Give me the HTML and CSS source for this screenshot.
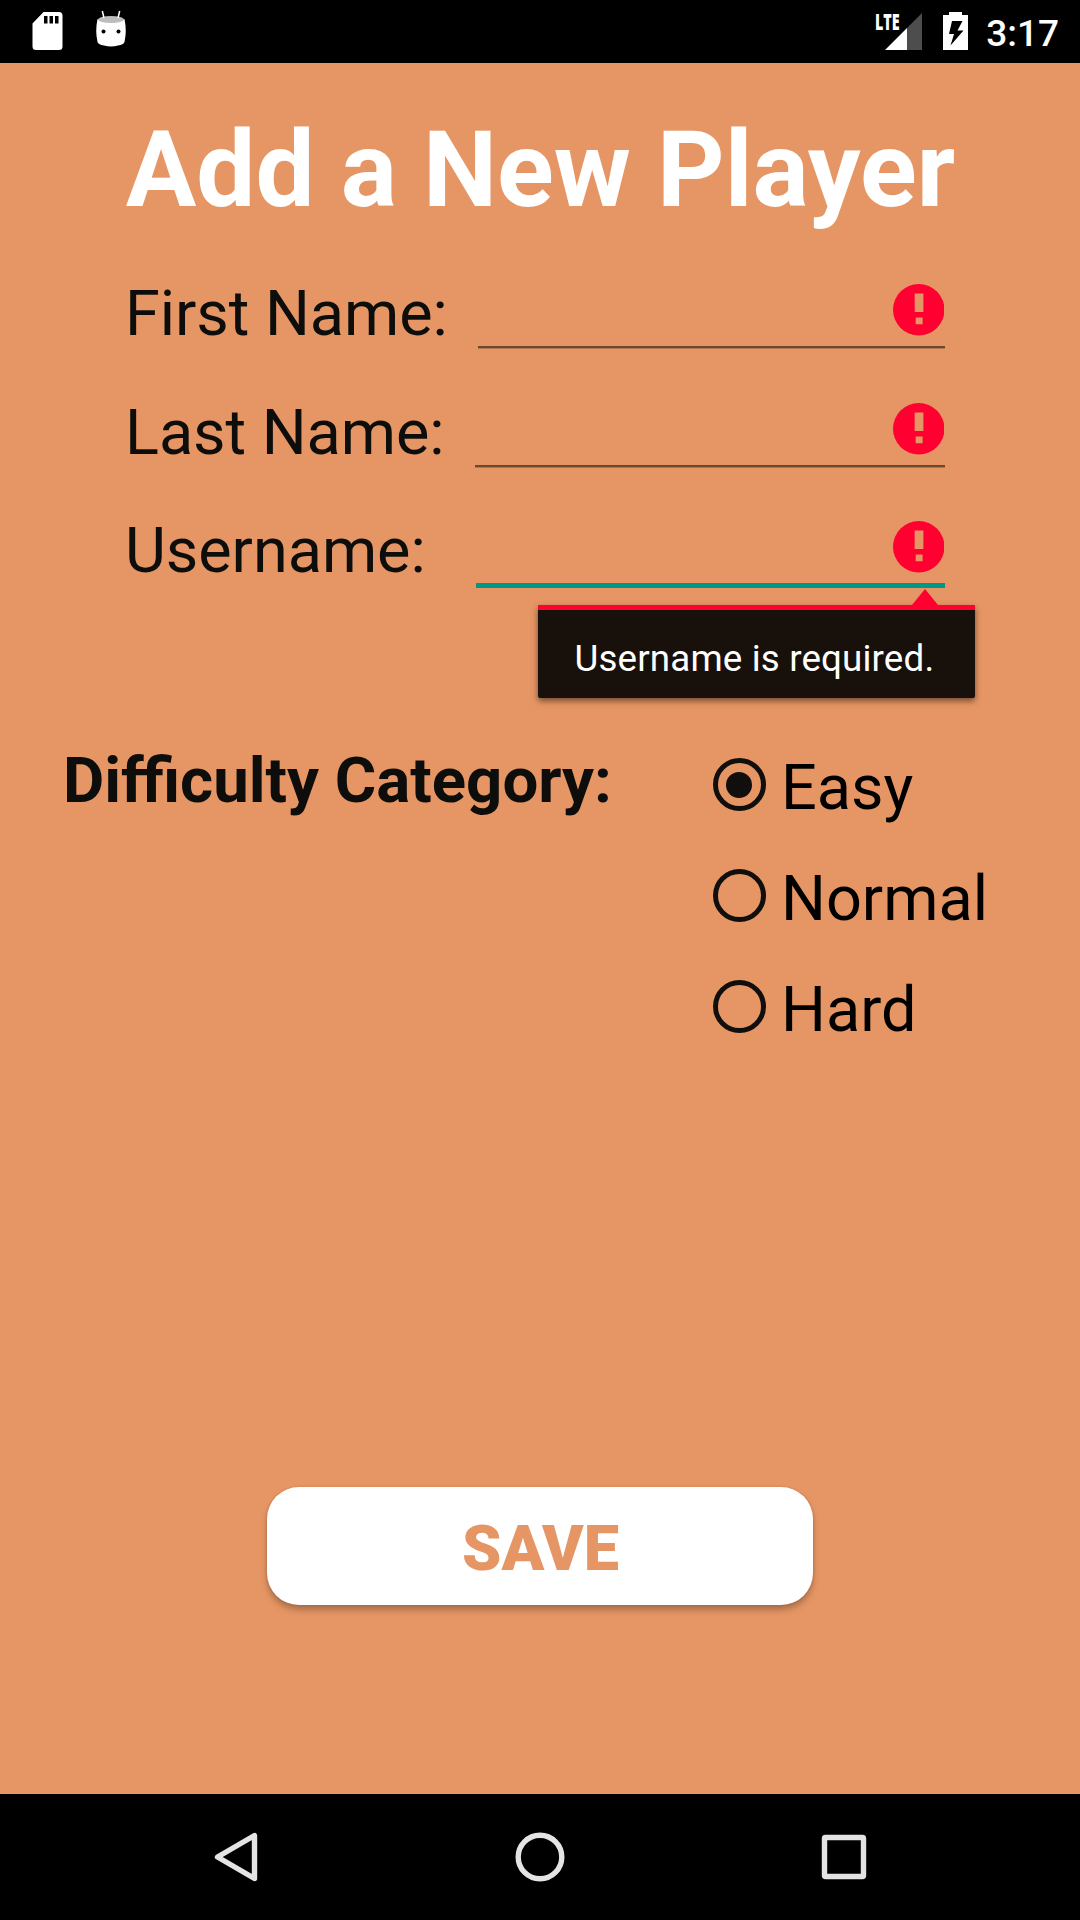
FILE: index.html
```html
<!DOCTYPE html>
<html lang="en">
<head>
<meta charset="utf-8">
<title>Add a New Player</title>
<link rel="stylesheet" href="styles.css">
</head>
<body>
<div class="screen">
  <header class="status">
    <div class="status-left">
      <svg class="sd" width="31" height="38" viewBox="0 0 31 38"><path fill="#fff" fill-rule="evenodd" d="M11.5 0H27Q30.500 0 30.500 3.500V34.500Q30.500 38 27 38H4Q.5 38 .5 34.500V11.500ZM12 4V11.500H15.500V4ZM17.500 4V11.500H21V4ZM23 4V11.500H26.500V4Z"/></svg>
      <svg class="droid" width="32" height="38" viewBox="0 0 32 38"><path fill="#fff" d="M2.500 9Q16 15 29.500 9Q32 21 29.500 32Q28.500 34.500 23 35.500Q16 37.500 9 35.500Q3.500 34.500 2.500 32Q0 21 2.500 9Z"/><ellipse cx="16" cy="9.500" rx="12.800" ry="3.500" fill="#bcbcbc"/><path d="M7.300 1 9 8M24.700 1 23 8" stroke="#fff" stroke-width="1.500"/><circle cx="8.500" cy="21.500" r="2"/><circle cx="23.500" cy="21.500" r="2"/></svg>
    </div>
    <div class="status-right">
      <span class="signal"><svg width="37" height="37" viewBox="0 0 37 37"><path fill="#fff" d="M0 37 22 15V37Z"/><path fill="#4d4d4d" d="M22 15 37 0V37H22Z"/></svg><span class="lte">LTE</span></span>
      <svg class="battery" width="25" height="38" viewBox="0 0 25 38"><path fill="#fff" fill-rule="evenodd" d="M6 0H19V3H25V38H0V3H6ZM9 9 6 22H11L7.500 33.500 20.500 18.500H14.500L19.500 9Z"/></svg>
      <span class="time">3:17</span>
    </div>
  </header>

  <main>
    <h1>Add a New Player</h1>
    <form class="fields">
      <div class="row first">
        <label>First Name:</label>
        <div class="field"><svg class="error" viewBox="2 2 20 20"><path d="M12 2a10 10 0 1 0 0 20 10 10 0 0 0 0-20zM10.400 5.700h3.400v7.200h-3.400zM10.800 15h2.700v2.600h-2.700z"/></svg></div>
      </div>
      <div class="row last">
        <label>Last Name:</label>
        <div class="field"><svg class="error" viewBox="2 2 20 20"><path d="M12 2a10 10 0 1 0 0 20 10 10 0 0 0 0-20zM10.400 5.700h3.400v7.200h-3.400zM10.800 15h2.700v2.600h-2.700z"/></svg></div>
      </div>
      <div class="row user">
        <label>Username:</label>
        <div class="field focused"><svg class="error" viewBox="2 2 20 20"><path d="M12 2a10 10 0 1 0 0 20 10 10 0 0 0 0-20zM10.400 5.700h3.400v7.200h-3.400zM10.800 15h2.700v2.600h-2.700z"/></svg>
          <div class="popup">Username is required.</div>
        </div>
      </div>
    </form>

    <section class="difficulty">
      <h2>Difficulty Category:</h2>
      <div class="options">
        <div class="option"><span class="radio checked"></span><span>Easy</span></div>
        <div class="option"><span class="radio"></span><span>Normal</span></div>
        <div class="option"><span class="radio"></span><span>Hard</span></div>
      </div>
    </section>

    <button class="save" type="button">SAVE</button>
  </main>

  <nav class="navbar">
    <svg width="50" height="54" viewBox="0 0 50 54"><path d="M43.500 5.500V48.500L6.500 27Z"/></svg>
    <svg width="50" height="54" viewBox="0 0 50 54"><circle cx="25" cy="27" r="21.800"/></svg>
    <svg width="50" height="54" viewBox="0 0 50 54"><rect x="5.500" y="7.500" width="39" height="39" rx="1"/></svg>
  </nav>
</div>
</body>
</html>
```
FILE: styles.css
```css
* { box-sizing: border-box; }

body {
  margin: 0;
  font-family: Roboto, sans-serif;
  background: #e69664;
}

svg { display: block; }

.screen {
  width: 1080px;
  height: 1920px;
  display: flex;
  flex-direction: column;
  overflow: hidden;
}

.status {
  height: 63px;
  background: #000;
  display: flex;
  justify-content: space-between;
}

.status-left,
.status-right { display: flex; align-items: flex-start; }

.status-left { padding: 12px 0 0 32px; gap: 31.500px; }
.droid { margin-top: -2px; }

.status-right { padding: 12px 21px 0 0; color: #fff; }

.signal { position: relative; margin: 1px 21.500px 0 0; }

.lte {
  position: absolute;
  left: -9.500px;
  top: -4px;
  font: 800 22px/24px "Open Sans", sans-serif;
  transform: scaleX(.65);
  transform-origin: 0 0;
}

.time {
  margin-left: 18px;
  font-weight: 500;
  font-size: 37px;
  line-height: 43px;
}

main {
  flex: 1;
  display: flex;
  flex-direction: column;
}

h1 {
  margin: 43px 0 18px;
  padding-left: 1px;
  font-size: 105px;
  line-height: 130px;
  font-weight: 700;
  color: #fff;
  text-align: center;
}

.fields { padding: 0 135px 0 125px; }

.row {
  display: flex;
  align-items: flex-start;
  height: 119px;
}

.row.last { height: 118px; }

.row label {
  font-size: 63px;
  letter-spacing: -.05px;
  line-height: 119px;
  color: #0d0d0c;
}

.field {
  position: relative;
  flex: 1;
  height: 94px;
  margin-left: 30.500px;
  padding: 30px 1px 0 0;
  display: flex;
  justify-content: flex-end;
  border-bottom: 2px solid #6b482f;
  box-shadow: 0 1px #b1744e;
}

.user .field { margin-left: 50.500px; }

.field.focused {
  height: 97px;
  border-bottom: 5px solid #009688;
  box-shadow: none;
}

.error { width: 51.500px; height: 51.500px; fill: #ff0030; fill-rule: evenodd; }

.popup {
  position: absolute;
  top: 114px;
  right: -29.500px;
  width: 437px;
  height: 93px;
  padding: 18px 0 0 37px;
  border-top: 5px solid #ff0030;
  border-radius: 0 0 2px 2px;
  background: #18100b;
  box-shadow: 0 3px 6px rgba(0, 0, 0, .5);
  color: #fff;
  font-size: 36.75px;
  letter-spacing: .15px;
  line-height: 61px;
  white-space: nowrap;
}

.popup::before {
  content: "";
  position: absolute;
  top: -21px;
  right: 37px;
  border: solid transparent;
  border-width: 0 13.5px 16px;
  border-bottom-color: #ff0030;
}

.difficulty {
  display: flex;
  justify-content: space-between;
  margin-top: 118px;
  padding: 0 92px 0 63px;
}

h2 {
  margin: 0;
  font-size: 63.500px;
  line-height: 105px;
  color: #0d0d0c;
}

.option {
  display: flex;
  align-items: flex-start;
  height: 111px;
  gap: 15px;
  font-size: 63px;
  line-height: 119px;
  color: #000;
}

.radio {
  width: 53px;
  height: 53px;
  margin-top: 30px;
  display: flex;
  align-items: center;
  justify-content: center;
  border: 5px solid #100f0e;
  border-radius: 50%;
}

.radio.checked::before {
  content: "";
  width: 26px;
  height: 26px;
  border-radius: 50%;
  background: #100f0e;
}

.save {
  align-self: center;
  width: 546px;
  height: 118px;
  margin: auto 0 189px;
  padding: 0 0 0 1px;
  border: 0;
  border-radius: 32px;
  background: #fff;
  box-shadow: 0 5px 6px rgba(0, 0, 0, .25), 0 0 3px rgba(0, 0, 0, .12);
  color: #e69664;
  font: 900 63px/123px Roboto, sans-serif;
}

.navbar {
  height: 126px;
  background: #000;
  display: flex;
  align-items: center;
  justify-content: space-between;
  padding: 0 211px;
  fill: none;
  stroke: #e4e4e4;
  stroke-width: 5.400;
  stroke-linejoin: round;
}
```
